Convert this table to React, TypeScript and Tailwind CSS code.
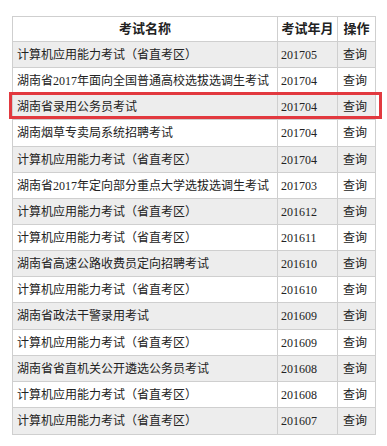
const rows: [string, string][] = [
  ["计算机应用能力考试（省直考区）", "201705"],
  ["湖南省2017年面向全国普通高校选拔选调生考试", "201704"],
  ["湖南省录用公务员考试", "201704"],
  ["湖南烟草专卖局系统招聘考试", "201704"],
  ["计算机应用能力考试（省直考区）", "201704"],
  ["湖南省2017年定向部分重点大学选拔选调生考试", "201703"],
  ["计算机应用能力考试（省直考区）", "201612"],
  ["计算机应用能力考试（省直考区）", "201611"],
  ["湖南省高速公路收费员定向招聘考试", "201610"],
  ["计算机应用能力考试（省直考区）", "201610"],
  ["湖南省政法干警录用考试", "201609"],
  ["计算机应用能力考试（省直考区）", "201609"],
  ["湖南省省直机关公开遴选公务员考试", "201608"],
  ["计算机应用能力考试（省直考区）", "201608"],
  ["计算机应用能力考试（省直考区）", "201607"],
];

export default function App() {
  return (
    <div
      className="relative h-[446px] w-[387px] bg-white pl-[12px] pt-[16px] text-[12px] text-[#222]"
      style={{ fontFamily: '"Liberation Serif", "Noto Sans CJK SC", serif' }}
    >
      <div className="w-[364px] border border-[#cfcfcf]">
        <div className="flex h-[25px] items-center border-b border-[#cfcfcf] text-[13px] font-bold">
          <div className="flex h-full w-[265px] items-center justify-center border-r border-[#cfcfcf]">考试名称</div>
          <div className="flex h-full w-[60px] items-center justify-center border-r border-[#cfcfcf]">考试年月</div>
          <div className="flex h-full flex-1 items-center justify-center">操作</div>
        </div>
        {rows.map((row, i) => (
          <div
            key={i}
            className={`flex ${i === 3 || i === 10 ? "h-[27px]" : "h-[26px]"} items-center ${i === rows.length - 1 ? "" : "border-b"} border-[#cfcfcf] ${i % 2 === 0 ? "bg-[#ededed]" : "bg-white"}`}
          >
            <div className="flex h-full w-[265px] items-center border-r border-[#cfcfcf] pl-[4px] whitespace-nowrap">{row[0]}</div>
            <div className="flex h-full w-[60px] items-center border-r border-[#cfcfcf] pl-[3px]">{row[1]}</div>
            <div className="flex h-full flex-1 items-center pl-[5px]">查询</div>
          </div>
        ))}
      </div>
      {/* highlight box */}
      <div className="absolute left-[9px] top-[92px] h-[27px] w-[373px] border-[3px] border-[#e2393f]" />
    </div>
  );
}
